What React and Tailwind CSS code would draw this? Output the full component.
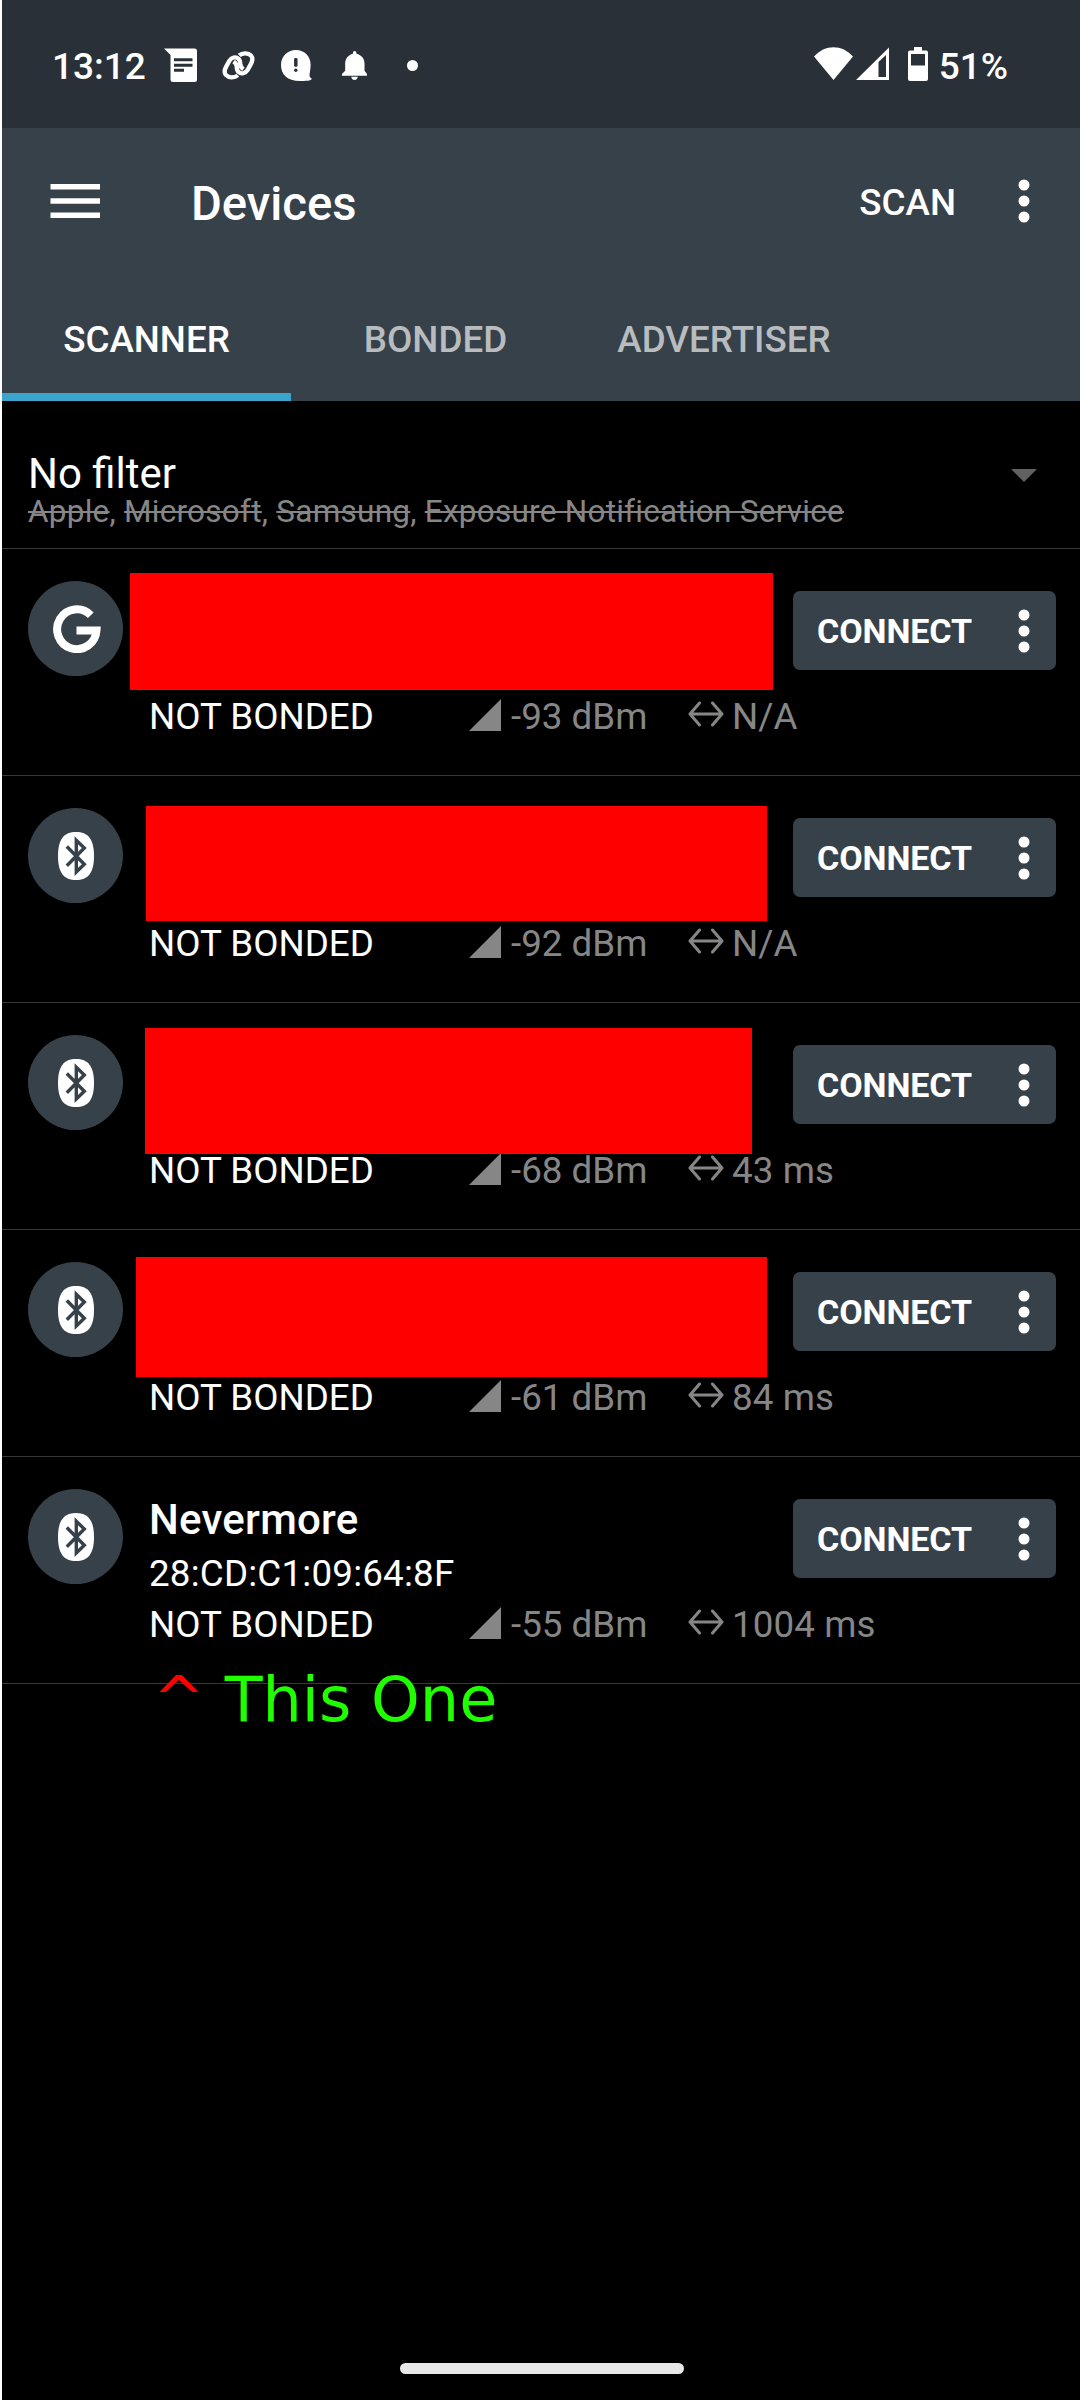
const devices = [
  { icon: "google", signal: "-93 dBm", interval: "N/A", cover: "left-[128px] top-[24px] w-[643px] h-[117px]" },
  { icon: "bluetooth", signal: "-92 dBm", interval: "N/A", cover: "left-[144px] top-[30px] w-[621px] h-[115px]" },
  { icon: "bluetooth", signal: "-68 dBm", interval: "43 ms", cover: "left-[143px] top-[25px] w-[607px] h-[126px]" },
  { icon: "bluetooth", signal: "-61 dBm", interval: "84 ms", cover: "left-[134px] top-[27px] w-[631px] h-[120px]" },
  { icon: "bluetooth", signal: "-55 dBm", interval: "1004 ms", name: "Nevermore", address: "28:CD:C1:09:64:8F" },
];

function MessageIcon() {
  return (
    <svg className="w-[33px] h-[34px] ml-[17px]" viewBox="0 0 33 34">
      <path fill="#fff" d="M0 .6H30.5Q33 .6 33 3V31.5Q33 34 30.5 34H9Q6.500 34 6.500 31.500V7Z" />
      <path fill="#2a3037" d="M10 10.200h18.500v3H10zM10 15.800h18.500v3H10zM10 20.700h10v3H10z" />
    </svg>
  );
}

function LinkIcon() {
  return (
    <svg className="w-[33px] h-[29px] ml-[25px]" viewBox="645 93 94 86" preserveAspectRatio="none" fill="none" stroke="#fff" strokeWidth="12.500">
      <path d="M690 165C680 174 664 173 656 164C650 156 652 149 656 141L666 122C672 112 684 108 692 116C697 121 697 127 697 133C698 140 700 143 706 147" />
      <path d="M694 106C704 97 720 98 728 107C734 115 732 122 728 130L718 149C712 159 700 163 692 155C687 150 687 144 687 138C686 131 684 128 678 124" />
    </svg>
  );
}

function AlertBubbleIcon() {
  return (
    <svg className="w-[31px] h-[31px] ml-[26px]" viewBox="815 89 90 92" preserveAspectRatio="none">
      <path fill="#fff" d="M858 89C884 89 901 108 901 133C901 148 897 160 898 167C899 172 904 172 904 175C904 180 884 181 870 181C833 181 815 162 815 133C815 108 834 89 858 89Z" />
      <rect x="853" y="113" width="10" height="26" rx="4" fill="#2a3037" />
      <circle cx="858" cy="149" r="5" fill="#2a3037" />
    </svg>
  );
}

function BellIcon() {
  return (
    <svg className="w-[25px] h-[29px] ml-[30px]" viewBox="993 93 71 88" preserveAspectRatio="none">
      <path fill="#fff" d="M1029 93Q1034 93 1034 99V101C1049 105 1057 116 1057 131V153L1064 163V168H993V163L1002 153V131C1002 116 1010 105 1024 101V99Q1024 93 1029 93ZM1019 171H1038C1037 177 1033 181 1029 181C1024 181 1020 177 1019 171Z" />
    </svg>
  );
}

function StatusBar() {
  return (
    <div className="flex h-[128px] shrink-0 items-start bg-[#2a3037] pl-[50px] pr-[72px] text-[37px] font-medium">
      <span className="mt-[45px] w-[95px] leading-[43px]">13:12</span>
      <div className="mt-[48px] flex h-[34px] items-center">
        <MessageIcon />
        <LinkIcon />
        <AlertBubbleIcon />
        <BellIcon />
        <span className="ml-[40px] h-[11px] w-[11px] rounded-full bg-white" />
      </div>
      <div className="ml-auto mt-[47px] flex items-start">
        <svg className="h-[33px] w-[39px]" viewBox="0 0 39 33">
          <path fill="#fff" d="M19.500 33L0 9.500C11 -3 28 -3 39 9.500Z" />
        </svg>
        <svg className="ml-[3px] h-[33px] w-[33px]" viewBox="0 0 33 33">
          <path fill="#fff" fillRule="evenodd" d="M33 .5V33H0ZM30 8L22.500 15V30H30Z" />
        </svg>
        <svg className="ml-[19px] h-[34px] w-[20px]" viewBox="0 0 20 34">
          <path fill="#fff" fillRule="evenodd" d="M6 0H14V3.500H18Q20 3.500 20 5.500V32Q20 34 18 34H2Q0 34 0 32V5.500Q0 3.500 2 3.500H6ZM3 7V18.500H17V7Z" />
        </svg>
        <span className="-mt-[2px] ml-[11px] leading-[43px]">51%</span>
      </div>
    </div>
  );
}

function MoreIcon() {
  return (
    <svg className="h-[44px] w-[12px] shrink-0" viewBox="0 0 12 44" fill="#fff">
      <circle cx="6" cy="6" r="5.500" />
      <circle cx="6" cy="22" r="5.500" />
      <circle cx="6" cy="38" r="5.500" />
    </svg>
  );
}

function AppBar() {
  return (
    <div className="flex h-[273px] shrink-0 flex-col bg-[#37414a]">
      <div className="flex h-[147px] items-center">
        <svg className="-mt-[1px] ml-[48px] h-[34px] w-[50px]" viewBox="0 0 50 34" fill="#fff">
          <path d="M.5 0H50V5.500H.5zM.5 14.200H50V19.700H.5zM.5 28.400H50V33.900H.5z" />
        </svg>
        <h1 className="ml-[91px] mt-[4px] text-[47.250px] font-medium leading-[56px]">Devices</h1>
        <span className="ml-auto text-[36.750px] font-medium leading-[44px] mt-[2px]">SCAN</span>
        <div className="-mt-[1px] ml-[62px] mr-[50px]">
          <MoreIcon />
        </div>
      </div>
      <div className="flex h-[126px] text-[36.750px] font-medium">
        <div className="flex w-[289px] items-center justify-center border-b-8 border-[#3ba5d0] pt-[11px]">SCANNER</div>
        <div className="flex w-[289px] items-center justify-center border-b-8 border-transparent pt-[11px] text-[#b8bcbf]">BONDED</div>
        <div className="flex w-[288px] items-center justify-center border-b-8 border-transparent pt-[11px] text-[#b8bcbf]">ADVERTISER</div>
      </div>
    </div>
  );
}

function FilterBar() {
  return (
    <div className="flex h-[148px] shrink-0 justify-between border-b border-[#383838] pl-[26px] pr-[42px]">
      <div>
        <div className="mt-[51px] text-[42px] leading-[44px]">No filter</div>
        <div className="text-[31.500px] leading-[31px] tracking-[0.250px] text-[#868686]">
          <s className="decoration-2">Apple</s>, <s className="decoration-2">Microsoft</s>, <s className="decoration-2">Samsung</s>,{" "}
          <s className="decoration-2">Exposure Notification Service</s>
        </div>
      </div>
      <svg className="mt-[68px] h-[14px] w-[28px]" viewBox="0 0 28 14">
        <path fill="#616161" d="M1 0H27L14 13Z" />
      </svg>
    </div>
  );
}

function Avatar({ icon }) {
  return (
    <div className="ml-[26px] mt-[32px] flex h-[95px] w-[95px] shrink-0 items-center justify-center rounded-full bg-[#37414a]">
      {icon === "google" ? (
        <svg className="ml-[2px] h-[48px] w-[48px]" viewBox="0 0 48 48" fill="none" stroke="#fff" strokeWidth="8">
          <path d="M37.800 10.200A19.700 19.900 0 1 0 43.500 25.500H23.500" />
        </svg>
      ) : (
        <svg className="h-[48px] w-[36px]" viewBox="0 0 36 48">
          <path fill="#fff" d="M18 0C30 0 36 7 36 24C36 41 30 48 18 48C6 48 0 41 0 24C0 7 6 0 18 0Z" />
          <path fill="none" stroke="#37414a" strokeWidth="3.400" d="M8.800 14.500L26.300 32.300L18.300 40V8.200L26.300 16L8.800 33.800" />
        </svg>
      )}
    </div>
  );
}

function DeviceRow({ icon, name, address, signal, interval, cover }) {
  return (
    <div className="relative flex h-[227px] shrink-0 border-b border-[#383838]">
      <Avatar icon={icon} />
      <div className="ml-[26px] flex flex-1 flex-col">
        <div className="flex h-[145px] justify-between">
          <div className="pt-[37px]">
            <div className="text-[42px] font-medium leading-[51px] tracking-[0.250px]">{name}</div>
            <div className="text-[36.750px] leading-[57px] tracking-[0.200px]">{address}</div>
          </div>
          <div className="mr-[24px] mt-[42px] flex h-[79px] w-[263px] items-center rounded-[7px] bg-[#37414a] pl-[24px] pr-[26px]">
            <span className="text-[34px] font-bold leading-[40px] mt-[1px] tracking-[-0.100px]">CONNECT</span>
            <div className="ml-auto">
              <MoreIcon />
            </div>
          </div>
        </div>
        <div className="flex h-[45px] items-center whitespace-nowrap text-[36.750px] leading-[45px] text-[#868686]">
          <span className="w-[320px] text-white">NOT BONDED</span>
          <svg className="mr-[10px] h-[32px] w-[32px] -mt-[3px]" viewBox="0 0 32 32">
            <path fill="#868686" d="M32 0V32H0Z" />
          </svg>
          <span className="w-[177px]">{signal}</span>
          <svg className="mr-[8px] h-[26px] w-[36px] -mt-[5px]" viewBox="0 0 36 26" fill="none" stroke="#868686" strokeWidth="3" strokeLinecap="round" strokeLinejoin="round">
            <path d="M2 13H34M11.500 2L2 13L11.500 24M24.500 2L34 13L24.500 24" />
          </svg>
          <span className="tracking-[0.100px]">{interval}</span>
        </div>
      </div>
      {cover && <div className={`absolute bg-[#ff0000] ${cover}`} />}
    </div>
  );
}

export default function App() {
  return (
    <div className="relative flex h-[2400px] w-[1080px] flex-col overflow-hidden border-l-2 border-white bg-black font-['Roboto',sans-serif] text-white">
      <StatusBar />
      <AppBar />
      <FilterBar />
      {devices.map((device, i) => (
        <DeviceRow key={i} {...device} />
      ))}
      <div className="absolute left-[151px] top-[1664px] whitespace-pre font-['DejaVu_Sans',sans-serif] text-[62px] leading-[72px] text-[#20ff00]">
        <span className="text-[#ff0000]">^</span> This One
      </div>
      <div className="mb-[26px] ml-[398px] mt-auto h-[11px] w-[284px] shrink-0 rounded-full bg-[#e8e8e8]" />
    </div>
  );
}
